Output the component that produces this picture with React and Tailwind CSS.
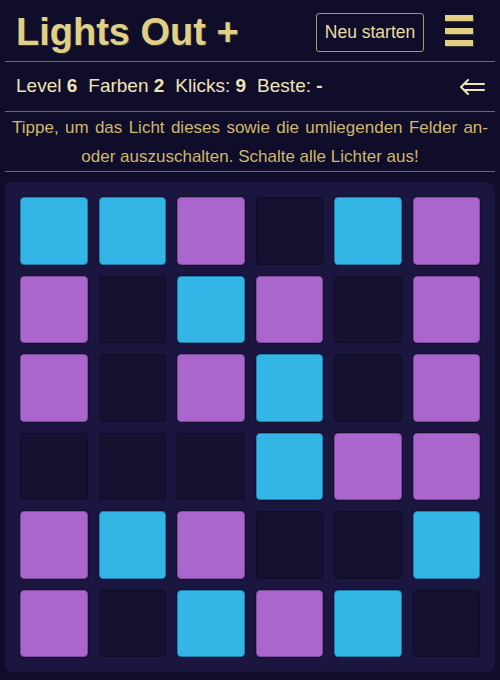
import React from 'react';

const C = 'c';
const P = 'p';
const D = 'd';

const board = [
  [C, C, P, D, C, P],
  [P, D, C, P, D, P],
  [P, D, P, C, D, P],
  [D, D, D, C, P, P],
  [P, C, P, D, D, C],
  [P, D, C, P, C, D],
];

function Cell({ kind }) {
  if (kind === C) {
    return <div className="aspect-square rounded-[4px] bg-[#33b5e5] border border-[#1f7fae] shadow-[0_0_0_1px_rgba(10,8,30,0.5)]" />;
  }
  if (kind === P) {
    return <div className="aspect-square rounded-[4px] bg-[#aa66cc] border border-[#7d4a9c] shadow-[0_0_0_1px_rgba(10,8,30,0.5)]" />;
  }
  return <div className="aspect-square rounded-[4px] bg-[#151130] border border-[#0f0c26]" />;
}

export default function App() {
  return (
    <div className="min-h-screen bg-[#100d2a] px-[5px] pb-[8px]" style={{ fontFamily: '"Liberation Sans", Arial, sans-serif' }}>
      <header className="flex items-center h-[62px] pt-[3px] pl-[11px] pr-[22px] border-b border-[#6d6a66]">
        <h1 className="text-[38px] font-bold leading-none text-[#e2cf86] [text-shadow:1px_1px_0_#2a3a3a]">Lights Out +</h1>
        <button className="ml-auto h-[39px] w-[108px] border border-[#a4966a] rounded-[3px] text-[17.5px] text-[#e8dba4]" style={{ fontFamily: '"Liberation Sans", Arial, sans-serif' }}>
          Neu starten
        </button>
        <div className="ml-[21px] -mt-[3px] flex flex-col gap-[6.5px]">
          <div className="w-[28px] h-[6px] bg-[#e2cf86] shadow-[1px_1px_0_#3a3a30]" />
          <div className="w-[28px] h-[6px] bg-[#e2cf86] shadow-[1px_1px_0_#3a3a30]" />
          <div className="w-[28px] h-[6px] bg-[#e2cf86] shadow-[1px_1px_0_#3a3a30]" />
        </div>
      </header>

      <div className="flex items-center h-[50px] pl-[11px] pr-[10px] border-b border-[#6d6a66] text-[19px] text-[#efe4b8]">
        <div className="flex gap-[11px]">
          <span>Level <b>6</b></span>
          <span>Farben <b>2</b></span>
          <span>Klicks: <b>9</b></span>
          <span>Beste: <b>-</b></span>
        </div>
        <svg className="ml-auto" width="25" height="16" viewBox="0 0 25 16" fill="none" stroke="#efe4b8" strokeWidth="2" strokeLinecap="round" strokeLinejoin="round">
          <path d="M8 1 L1 8 L8 15" />
          <path d="M5 5 H24" />
          <path d="M5 11 H24" />
        </svg>
      </div>

      <p className="text-justify [text-align-last:center] px-[7px] text-[17px] leading-[29px] text-[#cdb86c] pt-[1px] border-b border-[#6d6a66]">
        Tippe, um das Licht dieses sowie die umliegenden Felder an-oder auszuschalten. Schalte alle Lichter aus!
      </p>

      <div className="mt-[10px] bg-[#1a1640] rounded-[8px] p-[15px] grid grid-cols-6 gap-[11px]">
        {board.flat().map((k, i) => (
          <Cell key={i} kind={k} />
        ))}
      </div>
    </div>
  );
}
